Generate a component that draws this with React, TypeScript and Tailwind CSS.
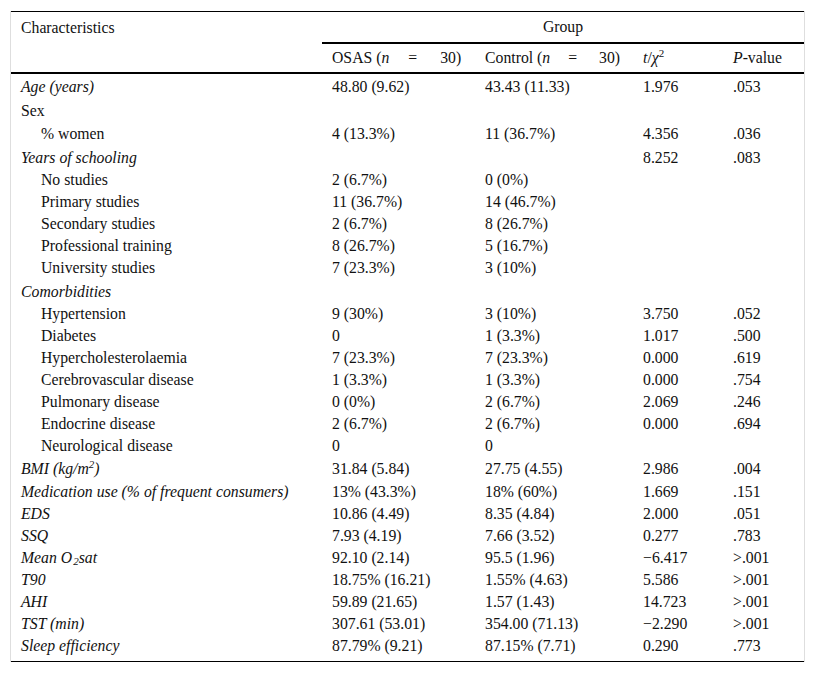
import React from "react"

type Row = {
  label: React.ReactNode
  italic?: boolean
  indent?: boolean
  osas?: string
  control?: string
  t?: string
  p?: string
  pad?: string
}

const rows: Row[] = [
  { label: "Age (years)", italic: true, osas: "48.80 (9.62)", control: "43.43 (11.33)", t: "1.976", p: ".053", pad: "pt-[2px]" },
  { label: "Sex", pad: "pt-[2px]" },
  { label: "% women", indent: true, osas: "4 (13.3%)", control: "11 (36.7%)", t: "4.356", p: ".036", pad: "pt-[1px]" },
  { label: "Years of schooling", italic: true, pad: "pt-[2px]", t: "8.252", p: ".083" },
  { label: "No studies", indent: true, osas: "2 (6.7%)", control: "0 (0%)" },
  { label: "Primary studies", indent: true, osas: "11 (36.7%)", control: "14 (46.7%)" },
  { label: "Secondary studies", indent: true, osas: "2 (6.7%)", control: "8 (26.7%)" },
  { label: "Professional training", indent: true, osas: "8 (26.7%)", control: "5 (16.7%)" },
  { label: "University studies", indent: true, osas: "7 (23.3%)", control: "3 (10%)" },
  { label: "Comorbidities", italic: true, pad: "pt-[2px]" },
  { label: "Hypertension", indent: true, osas: "9 (30%)", control: "3 (10%)", t: "3.750", p: ".052" },
  { label: "Diabetes", indent: true, osas: "0", control: "1 (3.3%)", t: "1.017", p: ".500" },
  { label: "Hypercholesterolaemia", indent: true, osas: "7 (23.3%)", control: "7 (23.3%)", t: "0.000", p: ".619" },
  { label: "Cerebrovascular disease", indent: true, osas: "1 (3.3%)", control: "1 (3.3%)", t: "0.000", p: ".754" },
  { label: "Pulmonary disease", indent: true, osas: "0 (0%)", control: "2 (6.7%)", t: "2.069", p: ".246" },
  { label: "Endocrine disease", indent: true, osas: "2 (6.7%)", control: "2 (6.7%)", t: "0.000", p: ".694" },
  { label: "Neurological disease", indent: true, osas: "0", control: "0" },
  {
    label: (
      <>
        BMI (kg/m<sup className="text-[11px]">2</sup>)
      </>
    ),
    italic: true,
    osas: "31.84 (5.84)",
    control: "27.75 (4.55)",
    t: "2.986",
    p: ".004",
    pad: "pt-[1px]",
  },
  { label: "Medication use (% of frequent consumers)", italic: true, osas: "13% (43.3%)", control: "18% (60%)", t: "1.669", p: ".151", pad: "pt-[1px]" },
  { label: "EDS", italic: true, osas: "10.86 (4.49)", control: "8.35 (4.84)", t: "2.000", p: ".051" },
  { label: "SSQ", italic: true, osas: "7.93 (4.19)", control: "7.66 (3.52)", t: "0.277", p: ".783" },
  {
    label: (
      <>
        Mean O<sub className="ml-[1px] text-[11px]">2</sub>sat
      </>
    ),
    italic: true,
    osas: "92.10 (2.14)",
    control: "95.5 (1.96)",
    t: "\u22126.417",
    p: ">.001",
  },
  { label: "T90", italic: true, osas: "18.75% (16.21)", control: "1.55% (4.63)", t: "5.586", p: ">.001" },
  { label: "AHI", italic: true, osas: "59.89 (21.65)", control: "1.57 (1.43)", t: "14.723", p: ">.001" },
  { label: "TST (min)", italic: true, osas: "307.61 (53.01)", control: "354.00 (71.13)", t: "\u22122.290", p: ">.001" },
  { label: "Sleep efficiency", italic: true, osas: "87.79% (9.21)", control: "87.15% (7.71)", t: "0.290", p: ".773" },
]

const cell = "pl-[10px] whitespace-nowrap align-middle"

export default function App() {
  return (
    <div className="min-h-[673px] bg-white pl-[10px] pt-[11px] font-['Liberation_Serif',serif] text-[15.75px] text-[#111]">
      <div className="w-[795px] border-x border-[#dedede]">
        <table className="w-full border-collapse leading-[22px]">
          <colgroup>
            <col className="w-[311px]" />
            <col className="w-[153px]" />
            <col className="w-[158px]" />
            <col className="w-[90px]" />
            <col />
          </colgroup>
          <thead>
            <tr className="border-t border-black">
              <th rowSpan={2} className={`${cell} text-left align-top pt-[5px] font-normal`}>
                Characteristics
              </th>
              <th colSpan={4} className="h-[31px] border-b-2 border-black text-center font-normal">
                Group
              </th>
            </tr>
            <tr className="border-b-2 border-black">
              <th className={`${cell} h-[30px] text-left font-normal`}>
                OSAS (<i>n</i>
                <span className="ml-[19px]">=</span>
                <span className="ml-[23px]">30)</span>
              </th>
              <th className={`${cell} text-left font-normal`}>
                Control (<i>n</i>
                <span className="ml-[18px]">=</span>
                <span className="ml-[22px]">30)</span>
              </th>
              <th className={`${cell} text-left font-normal`}>
                <i>t</i>/<i>χ</i>
                <sup className="text-[11px]">2</sup>
              </th>
              <th className={`${cell} text-left font-normal`}>
                <i>P</i>-value
              </th>
            </tr>
          </thead>
          <tbody className="border-b border-black">
            {rows.map((r, i) => {
              const c = `${cell} ${r.pad ?? ""}`
              return (
                <tr key={i}>
                  <td className={`${c} ${r.indent ? "pl-[30px]" : ""} ${r.italic ? "italic" : ""}`}>{r.label}</td>
                  <td className={c}>{r.osas}</td>
                  <td className={c}>{r.control}</td>
                  <td className={c}>{r.t}</td>
                  <td className={c}>{r.p}</td>
                </tr>
              )
            })}
            <tr>
              <td colSpan={5} className="h-[5px]" />
            </tr>
          </tbody>
        </table>
      </div>
    </div>
  )
}
